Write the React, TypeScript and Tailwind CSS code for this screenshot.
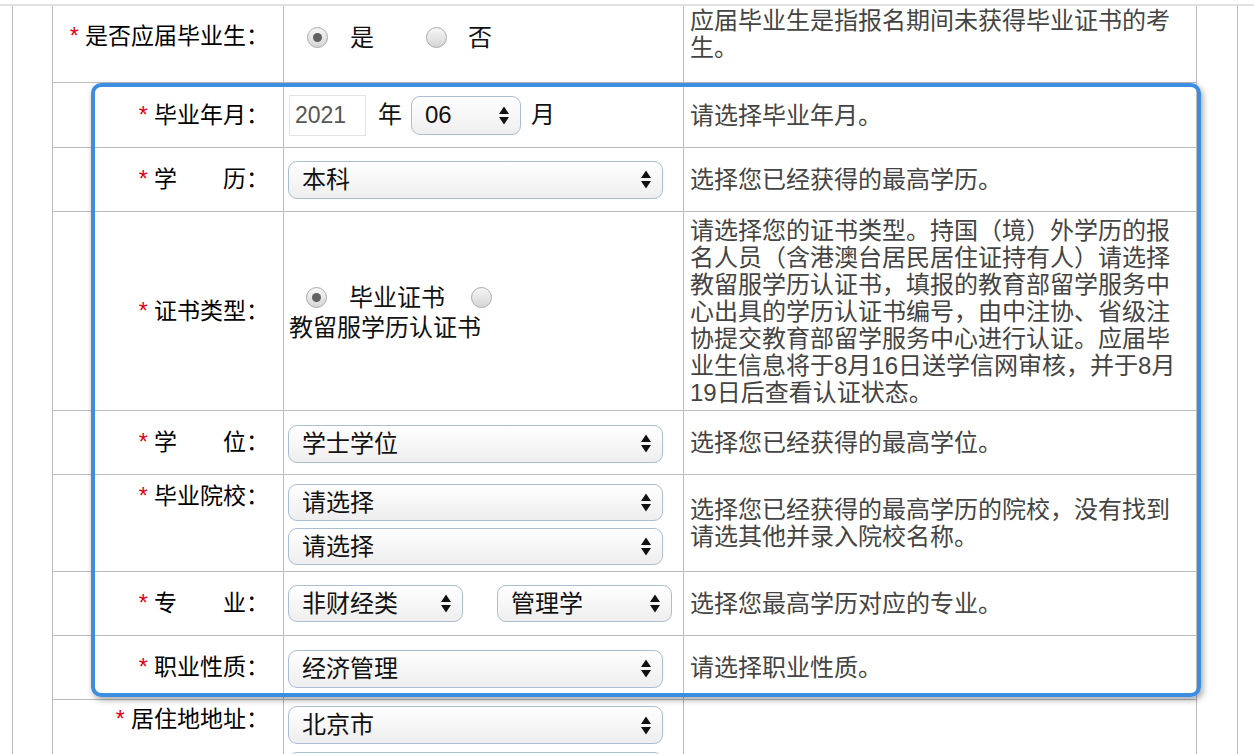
import React from 'react';

const labelFont = "font-['Liberation_Sans','Noto_Sans_CJK_SC',sans-serif]";

function Arrows() {
  return (
    <svg width="12" height="19" viewBox="0 0 12 19" className="shrink-0">
      <polygon points="1,8 6,0.5 11,8" fill="#111" />
      <polygon points="1,11 11,11 6,18.5" fill="#111" />
    </svg>
  );
}

function Select({ text, className = '' }: { text: string; className?: string }) {
  return (
    <div
      className={`flex items-center justify-between rounded-[9px] border border-[#a9bdd3] bg-linear-to-b from-white to-[#eeeeee] pr-[10px] pl-[13px] text-[24px] leading-none text-[#111] ${className}`}
    >
      <span>{text}</span>
      <Arrows />
    </div>
  );
}

function Radio({ checked }: { checked?: boolean }) {
  return (
    <span className="flex h-[21px] w-[21px] shrink-0 items-center justify-center rounded-full border border-[#a9a9a9] bg-linear-to-b from-[#f6f6f6] to-[#d6d6d6]">
      {checked && <span className="h-[9px] w-[9px] rounded-full bg-[#606060]" />}
    </span>
  );
}

function Label({ text }: { text: string }) {
  return (
    <>
      <span className="text-[#e60012]">*</span> {text}
    </>
  );
}

function Row({
  h,
  label,
  labelClass = 'items-center',
  input,
  inputClass = 'items-center',
  help,
  helpClass = 'items-center',
}: {
  h: string;
  label: React.ReactNode;
  labelClass?: string;
  input: React.ReactNode;
  inputClass?: string;
  help?: React.ReactNode;
  helpClass?: string;
}) {
  return (
    <div className={`flex border-b border-[#bcbcbc] ${h}`}>
      <div className={`flex w-[231px] shrink-0 justify-end border-r border-[#bcbcbc] pr-[14px] text-[23px] leading-[27px] text-black ${labelFont} ${labelClass}`}>
        <span className="whitespace-nowrap">{label}</span>
      </div>
      <div className={`flex w-[400px] shrink-0 border-r border-[#bcbcbc] pl-[4px] ${inputClass}`}>{input}</div>
      <div className={`flex w-[513px] shrink-0 border-r border-[#bcbcbc] pl-[6px] text-[24px] leading-[27px] text-[#444] ${helpClass}`}>
        <div>{help}</div>
      </div>
    </div>
  );
}

export default function App() {
  return (
    <div className={`relative h-[754px] w-[1254px] overflow-hidden bg-white ${labelFont}`}>
      <div className="mt-[4px] border-t-2 border-[#e2e2e2]">
        <div className="ml-[12px] w-[1226px] border-x border-[#bcbcbc] pl-[39px]">
          <div className="w-[1145px] border-l border-[#bcbcbc]">
            <Row
              h="h-[77px]"
              label={<Label text="是否应届毕业生：" />}
              labelClass="items-start pt-[17px]"
              inputClass="items-start pt-[18px]"
              input={
                <div className="flex items-center text-[24px] leading-[27px] text-[#111]">
                  <span className="ml-[19px]"><Radio checked /></span>
                  <span className="ml-[22px]">是</span>
                  <span className="ml-[52px]"><Radio /></span>
                  <span className="ml-[21px]">否</span>
                </div>
              }
              helpClass="items-start pt-[1px]"
              help={
                <>
                  <div>应届毕业生是指报名期间未获得毕业证书的考</div>
                  <div>生。</div>
                </>
              }
            />
            <Row
              h="h-[65px]"
              label={<Label text="毕业年月：" />}
              input={
                <div className="flex items-center text-[24px] text-[#111]">
                  <div className="ml-[1px] flex h-[41px] w-[77px] items-center border border-[#e3e3e3] pl-[5px] text-[23px] text-[#555]">2021</div>
                  <span className="ml-[12px]">年</span>
                  <Select text="06" className="ml-[9px] h-[39px] w-[110px]" />
                  <span className="ml-[10px]">月</span>
                </div>
              }
              help="请选择毕业年月。"
            />
            <Row
              h="h-[64px]"
              label={<Label text="学　　历：" />}
              input={<Select text="本科" className="h-[38px] w-[375px]" />}
              help="选择您已经获得的最高学历。"
            />
            <Row
              h="h-[199px]"
              label={<Label text="证书类型：" />}
              input={
                <div className="text-[24px] leading-[27px] text-[#111]">
                  <div className="flex h-[33px] items-center">
                    <span className="ml-[18px]"><Radio checked /></span>
                    <span className="ml-[22px]">毕业证书</span>
                    <span className="ml-[26px]"><Radio /></span>
                  </div>
                  <div className="ml-[1px]">教留服学历认证书</div>
                </div>
              }
              help={
                <>
                  <div>请选择您的证书类型。持国（境）外学历的报</div>
                  <div>名人员（含港澳台居民居住证持有人）请选择</div>
                  <div>教留服学历认证书，填报的教育部留学服务中</div>
                  <div>心出具的学历认证书编号，由中注协、省级注</div>
                  <div>协提交教育部留学服务中心进行认证。应届毕</div>
                  <div>业生信息将于8月16日送学信网审核，并于8月</div>
                  <div>19日后查看认证状态。</div>
                </>
              }
            />
            <Row
              h="h-[64px]"
              label={<Label text="学　　位：" />}
              input={<Select text="学士学位" className="mt-[2px] h-[38px] w-[375px]" />}
              help="选择您已经获得的最高学位。"
            />
            <Row
              h="h-[97px]"
              label={<Label text="毕业院校：" />}
              labelClass="items-start pt-[8px]"
              inputClass="items-start pt-[9px]"
              input={
                <div className="flex flex-col gap-[7px]">
                  <Select text="请选择" className="h-[37px] w-[375px]" />
                  <Select text="请选择" className="h-[37px] w-[375px]" />
                </div>
              }
              help={
                <>
                  <div>选择您已经获得的最高学历的院校，没有找到</div>
                  <div>请选其他并录入院校名称。</div>
                </>
              }
            />
            <Row
              h="h-[64px]"
              label={<Label text="专　　业：" />}
              input={
                <div className="flex items-center">
                  <Select text="非财经类" className="h-[37px] w-[175px]" />
                  <Select text="管理学" className="ml-[34px] h-[37px] w-[175px]" />
                </div>
              }
              help="选择您最高学历对应的专业。"
            />
            <Row
              h="h-[64px]"
              label={<Label text="职业性质：" />}
              input={<Select text="经济管理" className="mt-[2px] h-[38px] w-[375px]" />}
              help="请选择职业性质。"
            />
            <Row
              h="h-[120px]"
              label={<Label text="居住地地址：" />}
              labelClass="items-start pt-[6px]"
              inputClass="items-start pt-[6px]"
              input={
                <div className="flex flex-col gap-[8px]">
                  <Select text="北京市" className="h-[38px] w-[375px]" />
                  <Select text="" className="h-[38px] w-[375px]" />
                </div>
              }
              help=""
            />
          </div>
        </div>
      </div>

      {/* highlight frame drawn over the table */}
      <div className="pointer-events-none absolute top-[83px] left-[91px] h-[614px] w-[1110px] rounded-[10px] border-4 border-[#3b8ee2] shadow-[2px_3px_6px_rgba(0,0,0,0.35)]" />
    </div>
  );
}
